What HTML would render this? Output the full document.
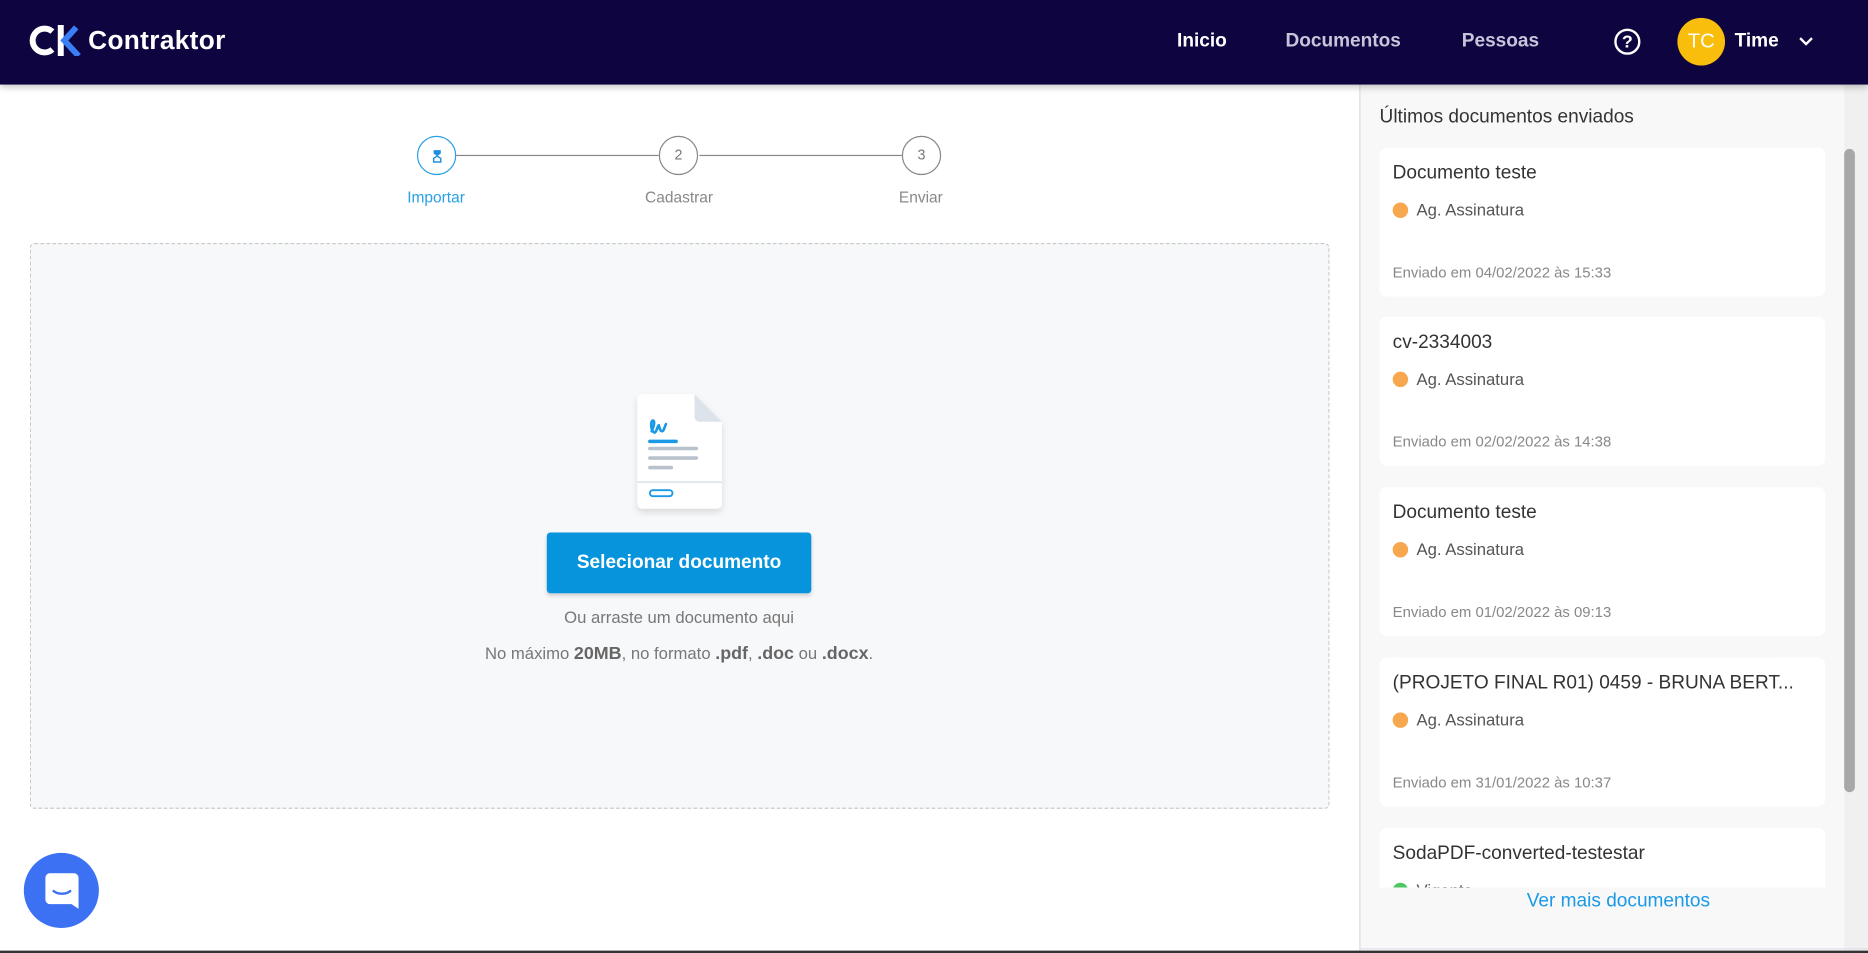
<!DOCTYPE html>
<html><head><meta charset="utf-8"><style>
*{margin:0;padding:0;box-sizing:border-box}
html,body{width:1868px;height:953px;overflow:hidden;background:#fff;font-family:"Liberation Sans",sans-serif}
#w{position:absolute;left:0;top:0;width:1568px;height:800px;transform:scale(1.19133,1.19125);transform-origin:0 0;background:#fff}
.a{position:absolute}
.hdr{left:0;top:0;width:1568px;height:71px;background:#0e0440;box-shadow:0 2px 6px rgba(0,0,0,.25);z-index:2}
.nav{top:26px;font-size:16px;font-weight:bold;color:#c8c5da}
.step{width:33px;height:33px;border-radius:50%;border:1px solid #888;font-size:12px;color:#777;text-align:center;line-height:31px;top:114px;background:#fff}
.lbl{top:158px;font-size:13px;color:#888;text-align:center;width:100px}
.card{left:1158px;width:374px;height:125px;background:#fff;border-radius:6px}
.card .t{position:absolute;left:11px;top:13px;font-size:16px;color:#333}
.card .d{position:absolute;left:11px;top:46px;width:13px;height:13px;border-radius:50%;background:#f7a84f}
.card .s{position:absolute;left:31px;top:44px;font-size:14px;color:#555}
.card .e{position:absolute;left:11px;top:98px;font-size:12.5px;color:#888}
</style></head><body><div id="w">
<div class="a hdr">
 <svg class="a" style="left:24px;top:21px" width="44" height="26" viewBox="0 0 44 26">
  <path d="M20 5.5A10 10 0 1 0 20 20.5" fill="none" stroke="#fff" stroke-width="5"/>
  <path d="M27 0v26" stroke="#fff" stroke-width="5"/>
  <path d="M40 2L30 13L42 26" fill="none" stroke="#3a7ff5" stroke-width="5"/>
 </svg>
 <div class="a" style="left:74px;top:21px;font-size:22px;font-weight:bold;color:#fff;letter-spacing:0.3px">Contraktor</div>
 <div class="a nav" style="left:988px;color:#fff">Inicio</div>
 <div class="a nav" style="left:1079px">Documentos</div>
 <div class="a nav" style="left:1227px">Pessoas</div>
 <div class="a" style="left:1355px;top:24px;width:22px;height:22px;border:2px solid #fff;border-radius:50%;color:#fff;font-weight:bold;font-size:15px;text-align:center;line-height:19px">?</div>
 <div class="a" style="left:1408px;top:15px;width:40px;height:40px;border-radius:50%;background:#f9bd0b;color:#fff;font-size:17px;text-align:center;line-height:40px">TC</div>
 <div class="a" style="left:1456px;top:26px;font-size:16px;font-weight:bold;color:#fff">Time</div>
 <svg class="a" style="left:1510px;top:31px" width="12" height="8"><path d="M1 1l5 5 5-5" fill="none" stroke="#fff" stroke-width="2"/></svg>
</div>

<div class="a" style="left:383px;top:130px;width:170px;height:1px;background:#888"></div>
<div class="a" style="left:587px;top:130px;width:170px;height:1px;background:#888"></div>
<div class="a step" style="left:350px;border-color:#2a9fe6;color:#2a9fe6">
 <svg width="10" height="12" style="margin-top:10px" viewBox="0 0 10 12"><path d="M2 1h6v3L5 6 2 4z" fill="#1e8fe0"/><path d="M2 11h6V8L5 6 2 8z" fill="none" stroke="#1e8fe0" stroke-width="1.2"/></svg>
</div>
<div class="a step" style="left:553px">2</div>
<div class="a step" style="left:757px">3</div>
<div class="a lbl" style="left:316px;color:#2a9fe6">Importar</div>
<div class="a lbl" style="left:520px">Cadastrar</div>
<div class="a lbl" style="left:723px">Enviar</div>

<div class="a" style="left:25px;top:204px;width:1091px;height:475px;border:1.5px dashed #c9c9c9;border-radius:4px;background:#f7f8fa"></div>
<svg class="a" style="left:528px;top:326px" width="86" height="108" viewBox="0 0 86 108">
 <defs><filter id="f" x="-30%" y="-30%" width="160%" height="160%"><feDropShadow dx="0" dy="3" stdDeviation="3" flood-opacity=".12"/></filter></defs>
 <path d="M11 5h44l23 23v69a4 4 0 0 1-4 4H11a4 4 0 0 1-4-4V9a4 4 0 0 1 4-4z" fill="#fff" filter="url(#f)"/>
 <path d="M55 5v19a4 4 0 0 0 4 4h19z" fill="#dde3ea"/>
 <path d="M19 36c2-4 3-9 1-9s-2 8 1 10c2 1 3-6 4-6 1 3 1 5 3 5 1 0 2-4 3-6" fill="none" stroke="#1a9ae6" stroke-width="2.2" stroke-linecap="round"/>
 <rect x="16" y="43" width="25" height="3" rx="1.5" fill="#1a9ae6"/>
 <rect x="16" y="49" width="42" height="3" rx="1.5" fill="#b9c2cc"/>
 <rect x="16" y="57" width="42" height="3" rx="1.5" fill="#b9c2cc"/>
 <rect x="16" y="65" width="21" height="3" rx="1.5" fill="#b9c2cc"/>
 <rect x="7" y="78" width="71" height="1.5" fill="#e0e5ea"/>
 <rect x="17.5" y="85.5" width="19" height="5" rx="2.5" fill="none" stroke="#1a9ae6" stroke-width="1.6"/>
</svg>
<div class="a" style="left:459px;top:447px;width:222px;height:51px;background:#0695dd;border-radius:3px;box-shadow:0 2px 3px rgba(0,0,0,.15);color:#fff;font-weight:bold;font-size:16px;text-align:center;line-height:51px">Selecionar documento</div>
<div class="a" style="left:320px;top:510px;width:500px;text-align:center;font-size:14px;color:#777">Ou arraste um documento aqui</div>
<div class="a" style="left:320px;top:540px;width:500px;text-align:center;font-size:14px;color:#777">No máximo <b style="font-size:15px;color:#666">20MB</b>, no formato <b style="font-size:15px;color:#666">.pdf</b>, <b style="font-size:15px;color:#666">.doc</b> ou <b style="font-size:15px;color:#666">.docx</b>.</div>

<div class="a" style="left:20px;top:716px;width:63px;height:63px;border-radius:50%;background:#3b71f2">
 <svg style="margin:17px 0 0 18px" width="28" height="30" viewBox="0 0 28 30"><path d="M4 0h20a4 4 0 0 1 4 4v26l-6-4H4a4 4 0 0 1-4-4V4a4 4 0 0 1 4-4z" fill="#fff"/><path d="M7 15c4 3 10 3 14 0" fill="none" stroke="#3b71f2" stroke-width="2" stroke-linecap="round"/></svg>
</div>

<div class="a" style="left:1141px;top:71px;width:427px;height:729px;background:#f8f8f8;border-left:1px solid #ddd"></div>
<div class="a" style="left:1158px;top:90px;font-size:16px;color:#333">Últimos documentos enviados</div>
<div class="a card" style="top:124px"><div class="t">Documento teste</div><div class="d"></div><div class="s">Ag. Assinatura</div><div class="e">Enviado em 04/02/2022 às 15:33</div></div>
<div class="a card" style="top:266px"><div class="t">cv-2334003</div><div class="d"></div><div class="s">Ag. Assinatura</div><div class="e">Enviado em 02/02/2022 às 14:38</div></div>
<div class="a card" style="top:409px"><div class="t">Documento teste</div><div class="d"></div><div class="s">Ag. Assinatura</div><div class="e">Enviado em 01/02/2022 às 09:13</div></div>
<div class="a card" style="top:552px"><div class="t">(PROJETO FINAL R01) 0459 - BRUNA BERT...</div><div class="d"></div><div class="s">Ag. Assinatura</div><div class="e">Enviado em 31/01/2022 às 10:37</div></div>
<div class="a card" style="top:695px;height:50px;overflow:hidden;border-radius:6px 6px 0 0"><div class="t">SodaPDF-converted-testestar</div><div class="d" style="background:#4cc764"></div><div class="s">Vigente</div></div>
<div class="a" style="left:1142px;top:745px;width:406px;height:52px;background:#f8f8f8"></div>
<div class="a" style="left:1142px;top:748px;width:433px;text-align:center;font-size:16px;color:#1a9ae6">Ver mais documentos</div>
<div class="a" style="left:1548px;top:71px;width:20px;height:727px;background:#f0f0f0"></div>
<div class="a" style="left:1548px;top:125px;width:9px;height:540px;background:#a8a8a8;border-radius:5px"></div>
<div class="a" style="left:1142px;top:796px;width:426px;height:1px;background:#dde3ea"></div>
<div class="a" style="left:0;top:798px;width:1568px;height:2px;background:#333"></div>
</div></body></html>
